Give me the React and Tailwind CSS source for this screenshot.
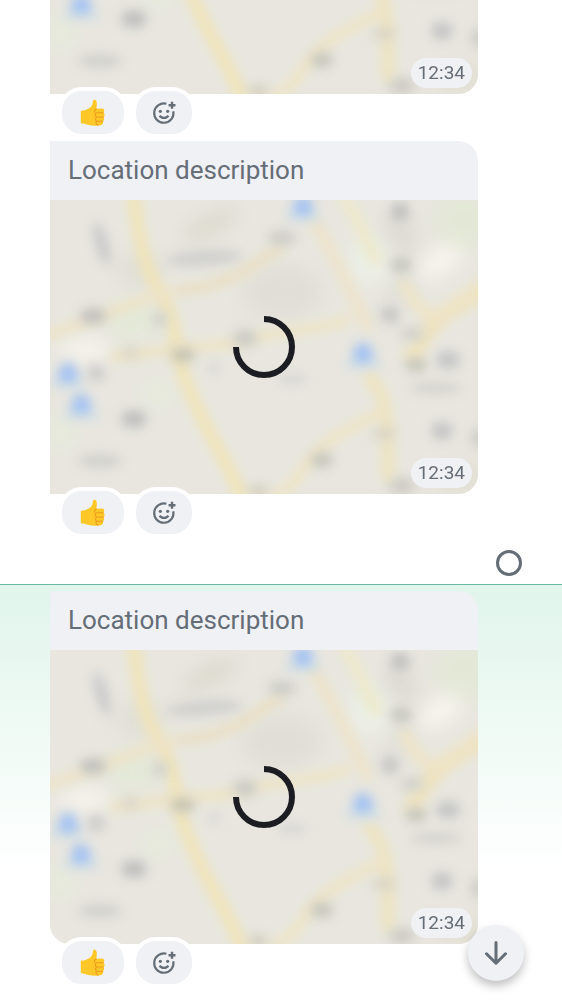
import { useId } from "react";

const roads = [
  { d: "M83 -8 C88 28 92 58 101 76 C112 94 122 112 126 142 C130 172 142 198 156 226 C168 250 184 274 194 304", w: 13, c: "#f0e4b8" },
  { d: "M126 90 C156 90 190 78 216 56 L234 46", w: 10, c: "#eadfc2" },
  { d: "M-6 136 C30 126 66 108 124 90", w: 11, c: "#ede3c8" },
  { d: "M60 158 C110 150 140 148 180 144 C230 128 268 132 300 118", w: 10, c: "#eee4c4" },
  { d: "M262 18 C284 52 300 92 320 130", w: 11, c: "#eee3c8" },
  { d: "M292 -6 C310 20 316 42 328 64", w: 12, c: "#eee9cb" },
  { d: "M438 90 C402 104 376 124 360 162", w: 18, c: "#eee3c0" },
  { d: "M352 80 C362 98 368 112 386 116 L438 80", w: 12, c: "#eee4c6" },
  { d: "M316 174 C340 196 338 220 338 282", w: 13, c: "#eee4c0" },
  { d: "M336 210 C304 226 272 240 254 268 C246 284 234 290 220 300", w: 11, c: "#eee4c6" },
];

const washes = [
  { x: 82, y: 120, rx: 24, ry: 16, c: "#e2ead6" },
  { x: 35, y: 150, rx: 26, ry: 12, c: "#f6f4ec" },
  { x: 320, y: 60, rx: 22, ry: 26, c: "#eef0e8" },
  { x: 392, y: 60, rx: 28, ry: 11, c: "#fbf7f2", r: -35 },
  { x: 414, y: 22, rx: 28, ry: 28, c: "#e3e8d6" },
  { x: 318, y: 52, rx: 9, ry: 9, c: "#dfeed6" },
  { x: 108, y: 194, rx: 16, ry: 14, c: "#e6ebdc" },
  { x: 10, y: 232, rx: 12, ry: 16, c: "#e6ecda" },
  { x: 414, y: 280, rx: 30, ry: 14, c: "#e2dfd2" },
  { x: 160, y: 25, rx: 32, ry: 10, c: "#dcdacd", r: -28 },
  { x: 232, y: 92, rx: 40, ry: 26, c: "#e0ded6" },
  { x: 350, y: 36, rx: 20, ry: 14, c: "#dcd9d2", r: 40 },
  { x: 90, y: 70, rx: 24, ry: 18, c: "#e1dfd6" },
  { x: 350, y: 90, rx: 20, ry: 10, c: "#dfded8", r: -20 },
];

const labels = [
  { x: 43, y: 116, rx: 13, ry: 8, c: "#c1c1bf" },
  { x: 52, y: 44, rx: 6, ry: 22, c: "#c8c8c8", r: -16 },
  { x: 154, y: 58, rx: 38, ry: 8, c: "#d0d0cd", r: -4 },
  { x: 232, y: 38, rx: 14, ry: 7, c: "#cccbc6" },
  { x: 350, y: 12, rx: 10, ry: 10, c: "#c2c2c0" },
  { x: 351, y: 65, rx: 11, ry: 8, c: "#c7c7be" },
  { x: 340, y: 115, rx: 10, ry: 9, c: "#c8c7c4" },
  { x: 362, y: 134, rx: 12, ry: 7, c: "#d2d1cc" },
  { x: 195, y: 138, rx: 12, ry: 9, c: "#cccbc8" },
  { x: 110, y: 119, rx: 8, ry: 8, c: "#d2d2ca" },
  { x: 133, y: 155, rx: 12, ry: 7, c: "#c4c2b3" },
  { x: 46, y: 173, rx: 9, ry: 9, c: "#cecdca" },
  { x: 84, y: 219, rx: 13, ry: 9, c: "#c0c0be" },
  { x: 50, y: 261, rx: 22, ry: 7, c: "#d1d1cd" },
  { x: 80, y: 153, rx: 9, ry: 6, c: "#dad6ca" },
  { x: 164, y: 168, rx: 6, ry: 7, c: "#dad9d5" },
  { x: 242, y: 179, rx: 15, ry: 6, c: "#d9d8d6" },
  { x: 366, y: 165, rx: 11, ry: 7, c: "#c6c4ba" },
  { x: 398, y: 160, rx: 12, ry: 9, c: "#c5c6c5" },
  { x: 386, y: 188, rx: 26, ry: 6, c: "#d5d4cf" },
  { x: 392, y: 231, rx: 11, ry: 9, c: "#c5c5c4" },
  { x: 428, y: 238, rx: 7, ry: 10, c: "#cbcac5" },
  { x: 272, y: 260, rx: 11, ry: 8, c: "#c8c6bc" },
  { x: 334, y: 234, rx: 12, ry: 6, c: "#d8d4c6" },
  { x: 352, y: 286, rx: 13, ry: 8, c: "#cccbc2" },
  { x: 208, y: 291, rx: 10, ry: 6, c: "#d2ceba" },
];

const pins = [
  { x: 253, y: 6 },
  { x: 313, y: 153 },
  { x: 18, y: 173 },
  { x: 31, y: 204 },
];

function Blot({ x, y, rx, ry, c, r = 0 }) {
  return <ellipse cx={x} cy={y} rx={rx} ry={ry} fill={c} transform={`rotate(${r} ${x} ${y})`} />;
}

function BlurredMap() {
  const id = useId();
  const soft = `${id}-soft`;
  const wide = `${id}-wide`;
  return (
    <svg
      role="img"
      aria-label="Map"
      viewBox="0 0 428 294"
      preserveAspectRatio="xMidYMid slice"
      className="block aspect-[428/294] w-full"
    >
      <defs>
        <filter id={soft} x="-10%" y="-10%" width="120%" height="120%">
          <feGaussianBlur stdDeviation="5.5" />
        </filter>
        <filter id={wide} x="-10%" y="-10%" width="120%" height="120%">
          <feGaussianBlur stdDeviation="10" />
        </filter>
      </defs>
      <rect width="428" height="294" fill="#e8e6df" />
      <g filter={`url(#${wide})`}>
        {washes.map((w) => (
          <Blot key={`${w.x}-${w.y}`} {...w} />
        ))}
      </g>
      <g filter={`url(#${soft})`} fill="none">
        {roads.map((road) => (
          <path key={road.d} d={road.d} stroke={road.c} strokeWidth={road.w} />
        ))}
      </g>
      <g filter={`url(#${soft})`}>
        {labels.map((l) => (
          <Blot key={`${l.x}-${l.y}`} {...l} />
        ))}
        {pins.map((p) => (
          <g key={`${p.x}-${p.y}`}>
            <path d={`M${p.x - 18} ${p.y + 14} L${p.x} ${p.y - 10} L${p.x + 18} ${p.y + 14} Z`} fill="#c6dae6" />
            <circle cx={p.x} cy={p.y} r="10" fill="#a4c3f2" />
          </g>
        ))}
      </g>
    </svg>
  );
}

function Spinner() {
  return (
    <svg role="status" aria-label="Loading" viewBox="0 0 64 64" className="size-16">
      <path d="M32 4 A28 28 0 1 1 4 32" fill="none" stroke="#1b1d22" strokeWidth="6" />
    </svg>
  );
}

function ThumbsUp() {
  return (
    <svg aria-hidden="true" viewBox="0 0 26 28" className="h-7 w-[26px]">
      <path
        d="M.8 11.6 C2.6 12 4.8 11.4 6.6 10.6 C9.4 9.4 11.6 7.6 12.3 5.8 C12.9 4.2 12.6 1.8 13.6 .9 C14.8 0 16.2 1.4 16.7 3.2 C17.2 5.4 16.6 8 16.2 9.8 L22 9.5 C24.4 9.6 25 12.6 23.3 13.7 C25.2 14.8 25 17.4 23.4 18.2 C24.8 19.4 24.2 21.6 22.8 22.2 C23.6 23.8 22.6 26 20.6 26.3 C16 26.9 12 26.8 8.6 26 C6 25.4 4.4 24.4 .8 24.2 Z"
        fill="#ffc828"
      />
      <path
        d="M16.2 9.8 C14.6 10.8 14.2 12.6 14.8 13.4 M23.3 13.7 H17 C14.8 14 14.8 17.6 16.8 18 H23.4 M16.8 18 C15 18.6 15.2 21.8 17 22.1 L22.8 22.2 M17 22.1 C15.4 22.8 15.8 25.4 18 26.3"
        fill="none"
        stroke="#eb9c1c"
        strokeWidth="1.1"
        strokeLinecap="round"
      />
    </svg>
  );
}

function AddReactionIcon() {
  return (
    <svg aria-hidden="true" viewBox="0 0 24 24" className="size-[26px]" fill="#656d77">
      <path d="M14.2 3.5 A8.9 8.9 0 1 0 20.6 10.4" fill="none" stroke="#656d77" strokeWidth="2" />
      <circle cx="8.6" cy="10.4" r="1.5" />
      <circle cx="15.4" cy="10.4" r="1.5" />
      <path d="M8 14.4 C9.6 17.2 14.4 17.2 16 14.4" fill="none" stroke="#656d77" strokeWidth="2" />
      <path d="M19.4 1.6 V8 M16.2 4.8 H22.6" stroke="#656d77" strokeWidth="2.2" />
    </svg>
  );
}

function Reactions() {
  return (
    <div className="relative -mt-[7px] flex gap-1 pl-2">
      <button
        type="button"
        aria-label="Thumbs up reaction"
        className="flex h-[51px] w-[70px] items-center justify-center rounded-3xl border-4 border-white bg-[#f0f1f5]"
      >
        <ThumbsUp />
      </button>
      <button
        type="button"
        aria-label="Add reaction"
        className="flex h-[51px] w-16 items-center justify-center rounded-3xl border-4 border-white bg-[#f0f1f5]"
      >
        <AddReactionIcon />
      </button>
    </div>
  );
}

function LocationMessage({ description, last = false }) {
  return (
    <article className="ml-[50px] mr-[84px] shrink-0">
      <div className={`overflow-hidden rounded-r-[20px] bg-[#f0f1f5] ${last ? "rounded-bl-[20px]" : ""}`}>
        {description && (
          <p className="px-[18px] py-[14px] text-[26px] leading-[31px] text-[#656d77]">{description}</p>
        )}
        <div className="grid">
          <div className="col-start-1 row-start-1">
            <BlurredMap />
          </div>
          <div className="col-start-1 row-start-1 place-self-center">
            <Spinner />
          </div>
          <time className="col-start-1 row-start-1 mb-[6px] mr-[6px] self-end justify-self-end rounded-full bg-[#f0f1f5] px-[7px] text-[19px] leading-[30px] text-[#656d77]">
            12:34
          </time>
        </div>
      </div>
      <Reactions />
    </article>
  );
}

export default function App() {
  return (
    <main className="relative flex h-screen flex-col justify-end overflow-hidden bg-white font-['Roboto',sans-serif]">
      <div className="flex shrink-0 flex-col gap-[3px]">
        <LocationMessage />
        <LocationMessage description="Location description" />
      </div>
      <div className="flex shrink-0 justify-end pb-2 pr-10 pt-3">
        <span role="img" aria-label="Sending" className="size-[26px] rounded-full border-[3px] border-[#656d77]" />
      </div>
      <section className="shrink-0 border-t border-[#6cb8a3] bg-linear-to-b from-[#e0f5eb] to-white to-70% pb-3 pt-[6px]">
        <LocationMessage description="Location description" last />
      </section>
      <button
        type="button"
        aria-label="Scroll to bottom"
        className="absolute bottom-[19px] right-[38px] flex size-14 items-center justify-center rounded-full bg-[#f0f1f5] shadow-[0_5px_10px_rgba(0,0,0,0.25)]"
      >
        <svg aria-hidden="true" viewBox="0 0 24 24" className="size-6" fill="none" stroke="#656d77" strokeWidth="3" strokeLinecap="round" strokeLinejoin="round">
          <path d="M12 1.5 V22 M2.5 12.8 L12 22.3 L21.5 12.8" />
        </svg>
      </button>
    </main>
  );
}
